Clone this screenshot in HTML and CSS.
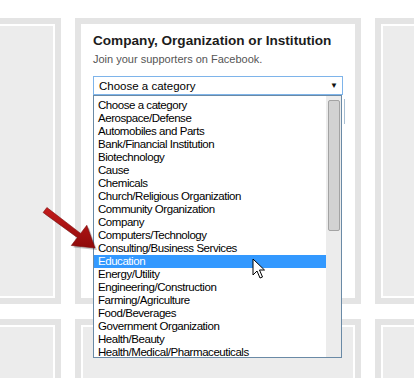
FILE: index.html
```html
<!DOCTYPE html>
<html lang="en">

<head>
	<meta charset="UTF-8" />
	<meta name="viewport" content="width=device-width, initial-scale=1.0" />
	<title>Create a Page</title>
	<link rel="stylesheet" href="styles.css">
</head>

<body>
	<div class="page">
		<div class="grid">
			<div class="card"><div class="fill"></div></div>

			<!-- open category card -->
			<div class="card card-open">
				<div class="title">Company, Organization or Institution</div>
				<div class="sub">Join your supporters on Facebook.</div>
				<div class="select-wrap">
					<div class="select">
						<span>Choose a category</span>
						<span class="caret">&#9660;</span>
					</div>
					<div class="select-edge"></div>
					<div class="listbox">
						<ul class="options">
							<li>Choose a category</li>
							<li>Aerospace/Defense</li>
							<li>Automobiles and Parts</li>
							<li>Bank/Financial Institution</li>
							<li>Biotechnology</li>
							<li>Cause</li>
							<li>Chemicals</li>
							<li>Church/Religious Organization</li>
							<li>Community Organization</li>
							<li>Company</li>
							<li>Computers/Technology</li>
							<li>Consulting/Business Services</li>
							<li class="active">Education</li>
							<li>Energy/Utility</li>
							<li>Engineering/Construction</li>
							<li>Farming/Agriculture</li>
							<li>Food/Beverages</li>
							<li>Government Organization</li>
							<li>Health/Beauty</li>
							<li>Health/Medical/Pharmaceuticals</li>
						</ul>
						<div class="scrollbar"><div class="thumb"></div></div>
					</div>
				</div>
			</div>

			<div class="card"><div class="fill"></div></div>
			<div class="card"><div class="fill"></div></div>
			<div class="card"><div class="fill"></div></div>
			<div class="card"><div class="fill"></div></div>
		</div>

		<!-- annotation arrow -->
		<svg class="pointer-arrow" width="110" height="60" viewBox="40 200 110 60">
			<defs>
				<linearGradient id="red" x1="0" y1="0" x2="0" y2="1">
					<stop offset="0" stop-color="#c41c1c" />
					<stop offset="1" stop-color="#8e0a0a" />
				</linearGradient>
			</defs>
			<polygon points="48.9,209.5 82.6,235.4 88.8,227.3 97,250 73.3,247.5 79.4,239.5 45.1,214.5" fill="#000" opacity="0.22" />
			<polygon points="46.9,207.5 80.6,233.4 86.8,225.3 95,248 71.3,245.5 77.4,237.5 43.1,212.5" fill="url(#red)" stroke="#7a0808" stroke-width="0.6" stroke-linejoin="round" />
		</svg>

		<!-- mouse cursor -->
		<svg class="cursor" width="14" height="22" viewBox="0 0 14 22">
			<path d="M1 1 L1 17 L5 13 L8 20 L10.5 19 L7.5 12 L12.5 12 Z" fill="#fff" stroke="#000" stroke-width="1" stroke-linejoin="miter" />
		</svg>
	</div>
</body>

</html>
```

FILE: styles.css
```css
body {
	margin: 0;
	background: #fff;
	font-family: "Liberation Sans", Arial, sans-serif;
}

.page {
	position: relative;
	width: 100vw;
	height: 100vh;
	overflow: hidden;
}

.grid {
	display: grid;
	grid-template-columns: repeat(3, 286px);
	grid-auto-rows: 286px;
	column-gap: 14px;
	row-gap: 15px;
	margin: 18px 0 0 -225px;
}

.card {
	box-sizing: border-box;
	border: 6px solid #e4e4e4;
	padding: 2px;
	background: #fff;
}

.card .fill {
	height: 100%;
	background: #ececec;
}

/* the card with the open dropdown */
.card-open {
	position: relative;
	padding: 9px 12px 0;
	z-index: 2;
}

.title {
	font-size: 13.6px;
	font-weight: bold;
	line-height: 16px;
	color: #1c1c1c;
}

.sub {
	margin-top: 3px;
	font-size: 11px;
	line-height: 14px;
	color: #555;
}

.select-wrap {
	position: relative;
	margin-top: 10px;
	width: 250px;
}

.select {
	box-sizing: border-box;
	height: 19px;
	border: 1px solid #7eb4ea;
	display: flex;
	align-items: center;
	justify-content: space-between;
	padding: 0 4px 0 5px;
	font-size: 11.5px;
	color: #000;
}

.caret {
	font-size: 8px;
	color: #111;
}

.select-edge {
	position: absolute;
	top: 23px;
	right: -2px;
	width: 1px;
	height: 25px;
	background: #a8bfd3;
}

.listbox {
	position: absolute;
	top: 19px;
	left: 0;
	width: 249px;
	height: 263px;
	box-sizing: border-box;
	border: 1px solid #6a8aa6;
	background: #fff;
	display: flex;
}

.options {
	list-style: none;
	margin: 0;
	padding: 3px 0 0;
	flex: 1;
}

.options li {
	height: 13px;
	line-height: 13px;
	padding-left: 4px;
	font-size: 11.5px;
	letter-spacing: -0.45px;
	color: #000;
	white-space: nowrap;
}

.options li.active {
	background: #3399ff;
	color: #fff;
}

.scrollbar {
	width: 15px;
	background: #ececec;
	padding: 4px 1px 0 2px;
	box-sizing: border-box;
}

.thumb {
	height: 131px;
	box-sizing: border-box;
	border: 1px solid #a3a3a3;
	border-radius: 2px;
	background: #d2d2d2;
}

.pointer-arrow {
	position: absolute;
	left: 40px;
	top: 200px;
	z-index: 3;
}

.cursor {
	position: absolute;
	left: 252px;
	top: 258px;
	z-index: 3;
}
```
